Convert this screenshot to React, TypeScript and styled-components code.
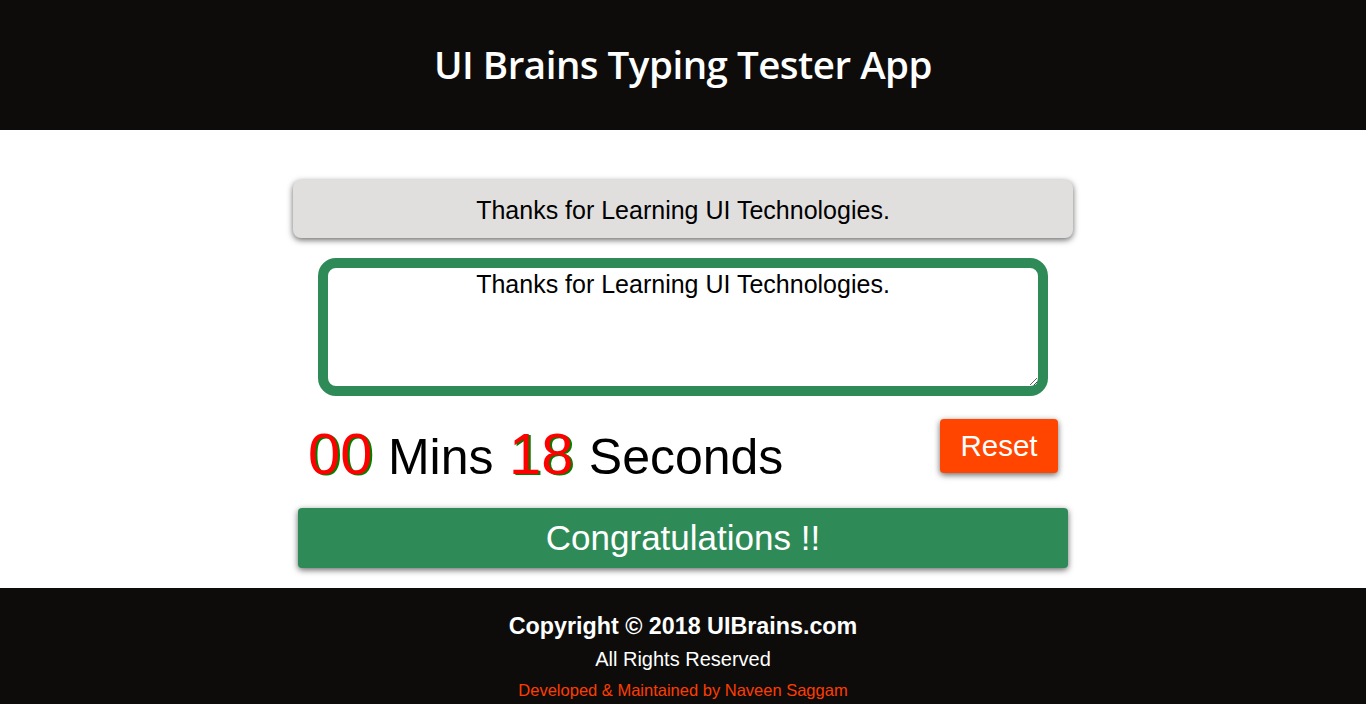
import React from "react";
import styled, { createGlobalStyle } from "styled-components";

const Global = createGlobalStyle`
  html, body { margin: 0; padding: 0; background: #ffffff; }
  body { font-family: "Liberation Sans", Arial, sans-serif; }
  * { box-sizing: border-box; }
`;

const Page = styled.div`
  display: flex;
  flex-direction: column;
  height: 704px;
  overflow: hidden;
`;

const Header = styled.header`
  flex: 0 0 130px;
  background: #0d0c0b;
  display: flex;
  align-items: center;
  justify-content: center;
`;

const Title = styled.h1`
  margin: 0;
  color: #ffffff;
  font-family: "Open Sans", "Noto Sans", sans-serif;
  font-weight: 600;
  font-size: 38.5px;
  letter-spacing: -0.5px;
  padding-bottom: 2px;
`;

const Main = styled.main`
  display: flex;
  flex-direction: column;
  align-items: center;
  padding: 50px 0 20px;
`;

const Prompt = styled.div`
  width: 780px;
  height: 58px;
  background: #e0dfde;
  border-radius: 8px;
  box-shadow: 0 2px 6px rgba(0, 0, 0, 0.6);
  display: flex;
  align-items: center;
  justify-content: center;
  font-size: 25px;
  color: #000;
  padding-top: 2px;
`;

const TypeArea = styled.textarea`
  width: 730px;
  height: 138px;
  margin-top: 20px;
  border: 10px solid #2e8b57;
  border-radius: 18px;
  padding: 2px 8px 0;
  font-family: "Liberation Sans", Arial, sans-serif;
  font-size: 25px;
  line-height: 28px;
  text-align: center;
  color: #000;
  outline: none;
  resize: vertical;
`;

const TimerRow = styled.div`
  width: 750px;
  height: 62px;
  margin-top: 23px;
  display: flex;
  justify-content: space-between;
  align-items: flex-start;
`;

const Timer = styled.div`
  margin-top: 5px;
  font-size: 50px;
  line-height: 60px;
  word-spacing: 1.5px;
  color: #000;
  white-space: nowrap;
`;

const Num = styled.span`
  font-size: 58px;
  line-height: 60px;
  color: #ff0000;
  text-shadow: 2px 1px 0 #008000;
`;

const ResetButton = styled.button`
  width: 118px;
  height: 54px;
  border: none;
  border-radius: 4px;
  background: #ff4500;
  color: #fff;
  font-family: "Liberation Sans", Arial, sans-serif;
  font-size: 29.5px;
  box-shadow: 0 2px 6px rgba(0, 0, 0, 0.6);
  cursor: pointer;
  padding: 0 0 1px;
`;

const Result = styled.div`
  width: 770px;
  height: 60px;
  margin-top: 27px;
  background: #2e8b57;
  border-radius: 4px;
  box-shadow: 0 2px 6px rgba(0, 0, 0, 0.6);
  color: #fff;
  font-size: 35px;
  display: flex;
  align-items: center;
  justify-content: center;
  padding-bottom: 1px;
`;

const Footer = styled.footer`
  flex: 1;
  background: #0d0c0b;
  display: flex;
  flex-direction: column;
  align-items: center;
  padding-top: 24px;
`;

const Copyright = styled.div`
  color: #fff;
  font-weight: bold;
  font-size: 23.3px;
  line-height: 28px;
`;

const Rights = styled.div`
  color: #fff;
  font-size: 20px;
  line-height: 24px;
  margin-top: 7px;
`;

const Credit = styled.div`
  color: #ff3c00;
  font-size: 16.5px;
  line-height: 20px;
  margin-top: 9px;
`;

export default function App() {
  const text = "Thanks for Learning UI Technologies.";
  return (
    <Page>
      <Global />
      <Header>
        <Title>UI Brains Typing Tester App</Title>
      </Header>
      <Main>
        <Prompt>{text}</Prompt>
        <TypeArea defaultValue={text} />
        <TimerRow>
          <Timer>
            <Num>00</Num> Mins <Num>18</Num> Seconds
          </Timer>
          <ResetButton>Reset</ResetButton>
        </TimerRow>
        <Result>Congratulations !!</Result>
      </Main>
      <Footer>
        <Copyright>Copyright © 2018 UIBrains.com</Copyright>
        <Rights>All Rights Reserved</Rights>
        <Credit>Developed &amp; Maintained by Naveen Saggam</Credit>
      </Footer>
    </Page>
  );
}
